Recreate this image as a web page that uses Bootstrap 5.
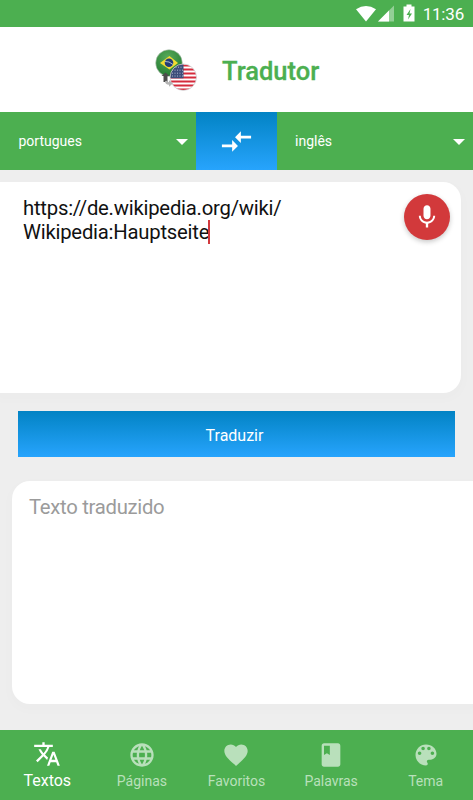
<!DOCTYPE html>
<html lang="pt">
<head>
<meta charset="utf-8">
<meta name="viewport" content="width=device-width, initial-scale=1">
<title>Tradutor</title>
<link rel="stylesheet" href="https://cdn.jsdelivr.net/npm/bootstrap@5.3.0/dist/css/bootstrap.min.css">
<style>
:root{--app-green:#4caf50}
body{font-family:Roboto,"Liberation Sans",sans-serif;background:#eee;color:#111;height:800px;line-height:1.2}
svg{display:block;flex:none}
.bg-app{background:var(--app-green)}
.status-bar{height:27px;padding:1px 9px 0 0;font-size:17px;letter-spacing:-.2px}
.title-bar{height:85px;padding-left:154px}
.title-bar h1{font-size:25.5px;font-weight:500;color:var(--app-green);margin:3px 0 0 24px;-webkit-text-stroke:.3px var(--app-green)}
.lang-bar{height:58px;font-size:14px}
.lang-from{width:196px;padding:1px 8px 0 18.5px}
.lang-to{padding:1px 8px 0 18px}
.blue-fill{background:linear-gradient(#0283c4,#27a4fd);border:0;border-radius:0}
.swap{width:81px}
.caret{width:0;height:0;border:6px solid transparent;border-top-color:#fff;border-bottom:0}
.source-box{margin:12px 12px 0 0;height:211px;border-radius:0 18px 18px 0;padding:14px 11px 0 23px;box-shadow:0 4px 10px 4px rgba(0,0,0,.012)}
.source-text{font-size:20.3px;line-height:23.5px;letter-spacing:-.23px;padding-top:1px}
.cursor{display:inline-block;width:2px;height:24px;background:#d2393d;vertical-align:0;margin:-5px 0 -5px -1px}
.mic{width:46px;height:46px;background:#d2393b;margin-top:-2px;box-shadow:0 2px 5px rgba(0,0,0,.22)}
.translate-btn{margin:18px 18px 0;height:46px;font-size:16px}
.result-box{margin:24px 0 0 12px;height:223px;border-radius:18px 0 0 18px;padding:14px 17px;font-size:20.3px;letter-spacing:-.29px;color:#9b9b9b;box-shadow:0 4px 10px 4px rgba(0,0,0,.012)}
.tabs{height:70px;font-size:14px}
.tabs a{color:#b9e0bb;padding-top:11px;gap:4px}
.tabs a.active{color:#fff;font-size:16px;padding-top:10px;gap:3px}
</style>
</head>
<body class="d-flex flex-column overflow-hidden">
<div class="status-bar bg-app text-white d-flex align-items-center justify-content-end">
  <svg width="67" height="27" viewBox="0 0 67 27" fill="#fff"><path d="M0 8.200Q10 1.800 20 8.200L10 20.500Z"/><path d="M38 4.500V20.500H22Z" opacity=".4"/><path d="M33 9.500V20.500H22Z"/><path d="M50.500 3.500h5v2H58.500V20.500H47.500V5.500h3z"/><path d="M54.500 8l-4 6h2.500l-1 4.500 4-6h-2.500z" fill="#4caf50"/></svg>
  <span>11:36</span>
</div>
<header class="title-bar bg-white d-flex align-items-center">
  <svg width="44" height="46" viewBox="0 0 44 46">
    <defs><radialGradient id="gr" cx=".45" cy=".3" r=".7"><stop offset="0" stop-color="#58aa5b"/><stop offset="1" stop-color="#247d32"/></radialGradient><clipPath id="us"><circle cx="29.300" cy="27.500" r="13"/></clipPath></defs>
    <g transform="translate(0 2)">
    <circle cx="15" cy="14" r="13.300" fill="url(#gr)" stroke="#bcc4bc" stroke-width=".6"/>
    <path d="M6 14l9.500-7L24 14l-8.500 6.500z" fill="#f2dc32"/><circle cx="15" cy="13.800" r="4.300" fill="#243c78"/><path d="M11 12.500q4-.5 8 3" stroke="#c8d4df" stroke-width=".8" fill="none"/>
    <g clip-path="url(#us)" transform="translate(0 .7)"><path fill="#fff" d="M16 14h27v27H16z"/><path d="M16 15.700h27M16 19.700h27M16 23.700h27M16 27.700h27M16 31.700h27M16 35.700h27M16 39.700h27" stroke="#d52b3c" stroke-width="2"/><path fill="#3d4e7b" d="M16 14h13.500v14.500H16z"/><path d="M19 17.500h10M18 20.500h11M18 23.500h11M18 26.300h11" stroke="#adb5cb" stroke-width="1" stroke-dasharray="1 1.500"/></g>
    <circle cx="29.300" cy="28.200" r="13.200" fill="none" stroke="#c9c9cc" stroke-width=".7"/>
    <path d="M9.500 27v6h4v-6H15.500L11.500 23.500 7.500 27z" fill="#4b4b4b"/><path d="M11 32q0 3.500 4 3.800v2l4-3.500-4-3v2q-2-.2-2-1.500z" fill="#b5b5b5"/>
    </g>
  </svg>
  <h1>Tradutor</h1>
</header>
<div class="lang-bar bg-app text-white d-flex">
  <div class="lang-from d-flex align-items-center justify-content-between"><span>portugues</span><i class="caret"></i></div>
  <button class="swap blue-fill d-flex align-items-center justify-content-center p-0" aria-label="Trocar idiomas"><svg width="35" height="35" viewBox="0 0 24 24" fill="#fff"><path d="M9.010 14H2v2h7.010v3L13 15l-3.990-4v3zm5.980-1v-3H22V8h-7.010V5L11 9l3.990 4z"/></svg></button>
  <div class="lang-to flex-grow-1 d-flex align-items-center justify-content-between"><span>inglês</span><i class="caret"></i></div>
</div>
<section class="source-box bg-white d-flex justify-content-between align-items-start">
  <div class="source-text">https://de.wikipedia.org/wiki/<br>Wikipedia:Hauptseite<span class="cursor"></span></div>
  <button class="mic rounded-circle border-0 p-0 d-flex align-items-center justify-content-center" aria-label="Falar"><svg width="28" height="28" viewBox="0 0 24 24" fill="#fff"><path d="M12 14c1.660 0 2.990-1.340 2.990-3L15 5c0-1.660-1.340-3-3-3S9 3.340 9 5v6c0 1.660 1.340 3 3 3zm5.300-3c0 3-2.540 5.100-5.300 5.100S6.700 14 6.700 11H5c0 3.410 2.720 6.230 6 6.720V21h2v-3.280c3.280-.48 6-3.300 6-6.720h-1.700z"/></svg></button>
</section>
<button class="translate-btn btn blue-fill text-white p-0 pt-1 pe-1">Traduzir</button>
<section class="result-box bg-white">Texto traduzido</section>
<nav class="tabs bg-app d-flex mt-auto">
  <a class="active col d-flex flex-column align-items-center text-decoration-none"><svg width="28" height="28" viewBox="0 0 24 24" fill="currentColor"><path d="M12.870 15.070l-2.540-2.510.03-.03A17.520 17.520 0 0 0 14.070 6H17V4h-7V2H8v2H1v1.990h11.170C11.500 7.920 10.440 9.750 9 11.350 8.070 10.320 7.300 9.190 6.690 8h-2c.73 1.630 1.730 3.170 2.980 4.560l-5.090 5.020L4 19l5-5 3.110 3.110.76-2.040zM18.500 10h-2L12 22h2l1.120-3h4.750L21 22h2l-4.500-12zm-2.620 7l1.620-4.330L19.120 17h-3.240z"/></svg>Textos</a>
  <a class="col d-flex flex-column align-items-center text-decoration-none"><svg width="28" height="28" viewBox="0 0 24 24" fill="currentColor"><path d="M11.990 2C6.470 2 2 6.480 2 12s4.470 10 9.990 10C17.520 22 22 17.520 22 12S17.520 2 11.990 2zm6.930 6h-2.950c-.32-1.250-.78-2.450-1.380-3.560 1.840.63 3.370 1.910 4.330 3.560zM12 4.040c.83 1.200 1.480 2.530 1.910 3.960h-3.820c.43-1.430 1.080-2.760 1.910-3.960zM4.260 14C4.100 13.360 4 12.690 4 12s.1-1.360.26-2h3.380c-.08.66-.14 1.320-.14 2s.06 1.340.14 2H4.260zm.82 2h2.950c.32 1.250.78 2.450 1.380 3.560-1.840-.63-3.370-1.900-4.330-3.560zm2.950-8H5.080c.96-1.660 2.490-2.930 4.330-3.560C8.810 5.550 8.350 6.750 8.030 8zM12 19.960c-.83-1.200-1.480-2.530-1.910-3.960h3.820c-.43 1.430-1.080 2.760-1.910 3.960zM14.340 14H9.660c-.09-.66-.16-1.320-.16-2s.07-1.350.16-2h4.680c.09.65.16 1.320.16 2s-.07 1.340-.16 2zm.25 5.560c.6-1.110 1.060-2.310 1.380-3.560h2.950c-.96 1.650-2.490 2.930-4.330 3.560zM16.360 14c.08-.66.14-1.320.14-2s-.06-1.340-.14-2h3.380c.16.64.26 1.310.26 2s-.1 1.360-.26 2h-3.380z"/></svg>Páginas</a>
  <a class="col d-flex flex-column align-items-center text-decoration-none"><svg width="28" height="28" viewBox="0 0 24 24" fill="currentColor"><path d="M12 21.350l-1.450-1.320C5.400 15.360 2 12.280 2 8.500 2 5.420 4.420 3 7.500 3c1.740 0 3.410.81 4.500 2.090C13.090 3.810 14.760 3 16.500 3 19.580 3 22 5.420 22 8.500c0 3.780-3.400 6.860-8.550 11.540L12 21.350z"/></svg>Favoritos</a>
  <a class="col d-flex flex-column align-items-center text-decoration-none"><svg width="28" height="28" viewBox="0 0 24 24" fill="currentColor"><path d="M18 2H6c-1.100 0-2 .9-2 2v16c0 1.100.9 2 2 2h12c1.100 0 2-.9 2-2V4c0-1.100-.9-2-2-2zM6 4h5v8l-2.500-1.500L6 12V4z"/></svg>Palavras</a>
  <a class="col d-flex flex-column align-items-center text-decoration-none"><svg width="28" height="28" viewBox="0 0 24 24" fill="currentColor"><path d="M12 3c-4.970 0-9 4.030-9 9s4.030 9 9 9c.83 0 1.500-.67 1.500-1.500 0-.39-.15-.74-.39-1.010-.23-.26-.38-.61-.38-.99 0-.83.67-1.500 1.500-1.500H16c2.760 0 5-2.240 5-5 0-4.420-4.030-8-9-8zm-5.500 9c-.83 0-1.500-.67-1.500-1.500S5.670 9 6.500 9 8 9.670 8 10.500 7.330 12 6.500 12zm3-4C8.670 8 8 7.330 8 6.500S8.670 5 9.500 5s1.500.67 1.500 1.500S10.330 8 9.500 8zm5 0c-.83 0-1.500-.67-1.500-1.500S13.670 5 14.500 5s1.500.67 1.500 1.500S15.330 8 14.500 8zm3 4c-.83 0-1.500-.67-1.500-1.500S16.670 9 17.500 9s1.500.67 1.500 1.500-.67 1.500-1.500 1.500z"/></svg>Tema</a>
</nav>
<script src="https://cdn.jsdelivr.net/npm/bootstrap@5.3.0/dist/js/bootstrap.bundle.min.js"></script>
</body>
</html>
